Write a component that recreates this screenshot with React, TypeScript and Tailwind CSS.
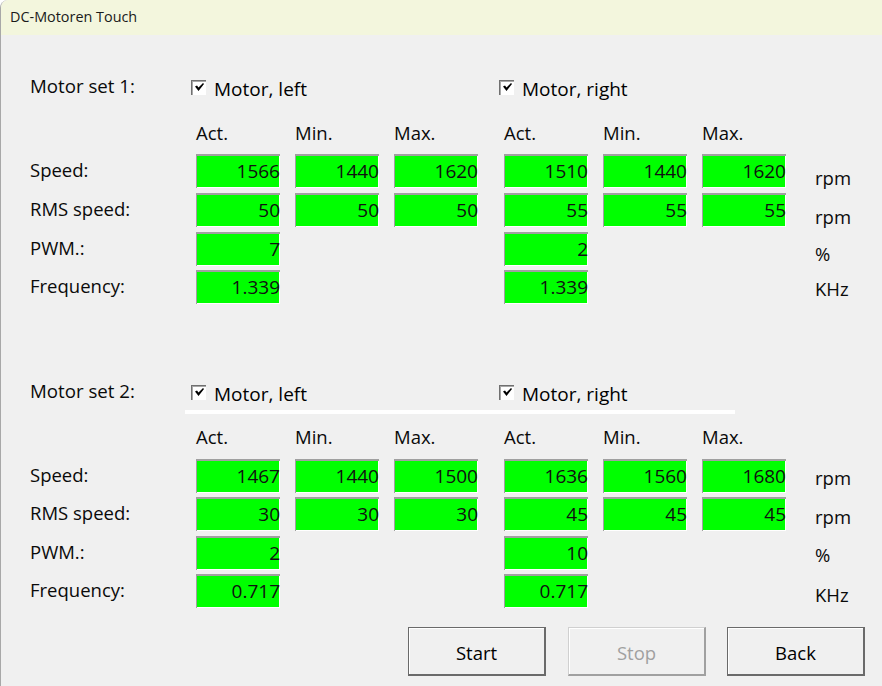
const FONT = "font-['Open_Sans','Noto_Sans',sans-serif]";

type Row = {
  label: string;
  unit: string;
  left: string[];
  right: string[];
  gap: string;
  unitOffset: string;
};

const CHECK_PATH = "M1 4.5 L3 3.5 L4.5 5.5 L9 1 L10 2 L4.5 9 Z";

function Check({ label }: { label: string }) {
  return (
    <div className="flex items-center">
      <div className="w-[15px] h-[15px] bg-white border-t border-l border-t-[#707070] border-l-[#707070] shadow-[inset_1px_1px_0_#a8a8a8] flex items-center justify-center mb-[4px]">
        <svg width="11" height="11" viewBox="0 0 11 11">
          <path d={CHECK_PATH} fill="#000" />
        </svg>
      </div>
      <span className="ml-[8px] text-[19px] leading-[24px] text-black">{label}</span>
    </div>
  );
}

function Field({ value }: { value: string }) {
  return (
    <div className="w-[84px] h-[34px] pb-[2px] bg-[#00ff00] border-t-2 border-l border-t-[#a0a0a0] border-l-[#a0a0a0] shadow-[inset_-1px_-1px_0_#fff] flex items-center justify-end text-[19px] text-[#101010] leading-none">
      {value}
    </div>
  );
}

function FieldGroup({ values }: { values: string[] }) {
  return (
    <div className="w-[282px] flex gap-[15px] shrink-0">
      {values.map((v, i) => (
        <Field key={i} value={v} />
      ))}
    </div>
  );
}

function Heads() {
  return (
    <div className="w-[282px] flex gap-[15px] shrink-0 text-[18.5px] leading-[24px]">
      <span className="w-[84px]">Act.</span>
      <span className="w-[84px]">Min.</span>
      <span className="w-[84px]">Max.</span>
    </div>
  );
}

function MotorSet({ title, rows, divider, headGap, fieldGap }: { title: string; rows: Row[]; divider?: boolean; headGap: string; fieldGap: string }) {
  return (
    <section>
      <div className="flex h-[24px]">
        <div className="w-[191px] pl-[30px] text-[18.7px] leading-[24px] -mt-[3px]">{title}</div>
        <div className="w-[308px]">
          <Check label="Motor, left" />
        </div>
        <Check label="Motor, right" />
      </div>
      {divider ? (
        <div className="ml-[185px] mt-[4px] w-[550px] h-[4px] bg-white" />
      ) : (
        <div className="mt-[4px] h-[4px]" />
      )}
      <div className={`flex ${headGap} pl-[196px] gap-[26px]`}>
        <Heads />
        <Heads />
      </div>
      <div className={`${fieldGap} flex flex-col`}>
        {rows.map((r) => (
          <div key={r.label} className={`flex h-[34px] ${r.gap}`}>
            <div className="w-[196px] pl-[30px] text-[18.5px] leading-[32px] shrink-0">{r.label}</div>
            <div className="flex gap-[26px]">
              <FieldGroup values={r.left} />
              <FieldGroup values={r.right} />
            </div>
            <div className={`ml-[29px] text-[18.5px] leading-[24px] ${r.unitOffset}`}>{r.unit}</div>
          </div>
        ))}
      </div>
    </section>
  );
}

const SET_1: Row[] = [
  { label: "Speed:", unit: "rpm", left: ["1566", "1440", "1620"], right: ["1510", "1440", "1620"], gap: "", unitOffset: "mt-[12px]" },
  { label: "RMS speed:", unit: "rpm", left: ["50", "50", "50"], right: ["55", "55", "55"], gap: "mt-[5px]", unitOffset: "mt-[12px]" },
  { label: "PWM.:", unit: "%", left: ["7"], right: ["2"], gap: "mt-[5px]", unitOffset: "mt-[10px]" },
  { label: "Frequency:", unit: "KHz", left: ["1.339"], right: ["1.339"], gap: "mt-[4px]", unitOffset: "mt-[7px]" },
];

const SET_2: Row[] = [
  { label: "Speed:", unit: "rpm", left: ["1467", "1440", "1500"], right: ["1636", "1560", "1680"], gap: "", unitOffset: "mt-[7px]" },
  { label: "RMS speed:", unit: "rpm", left: ["30", "30", "30"], right: ["45", "45", "45"], gap: "mt-[4px]", unitOffset: "mt-[8px]" },
  { label: "PWM.:", unit: "%", left: ["2"], right: ["10"], gap: "mt-[5px]", unitOffset: "mt-[7px]" },
  { label: "Frequency:", unit: "KHz", left: ["0.717"], right: ["0.717"], gap: "mt-[4px]", unitOffset: "mt-[9px]" },
];

function Button({ label, disabled, className }: { label: string; disabled?: boolean; className?: string }) {
  return (
    <button
      className={`w-[138px] h-[49px] pt-[3px] bg-[#f0f0f0] text-[18.5px] border-t border-l border-r-2 border-b-2 shadow-[inset_1px_1px_0_#fff] ${className ?? ""} ${
        disabled
          ? "border-[#d0d0d0] border-r-[#a0a0a0] border-b-[#a0a0a0] text-[#a0a0a0]"
          : "border-[#6a6a6a] text-black"
      }`}
    >
      {label}
    </button>
  );
}

export default function App() {
  return (
    <div className={`w-[882px] h-[686px] overflow-hidden bg-[#f0f0f0] text-[#0a0a0a] border-l border-[#a8a8a8] rounded-tl-lg flex flex-col ${FONT}`}>
      <div className="h-[35px] shrink-0 bg-[#f3f6dd] pl-[9px] text-[14.4px] leading-[34px] text-[#1a1a1a]">DC-Motoren Touch</div>
      <div className="-ml-px">
        <div className="mt-[42px]">
          <MotorSet title="Motor set 1:" rows={SET_1} headGap="mt-[12px]" fieldGap="mt-[9px]" />
        </div>
        <div className="mt-[78px]">
          <MotorSet title="Motor set 2:" rows={SET_2} divider headGap="mt-[11px]" fieldGap="mt-[10px]" />
        </div>
        <div className="mt-[19px] pl-[408px] flex">
          <Button label="Start" />
          <Button label="Stop" disabled className="ml-[22px]" />
          <Button label="Back" className="ml-[21px]" />
        </div>
      </div>
    </div>
  );
}
